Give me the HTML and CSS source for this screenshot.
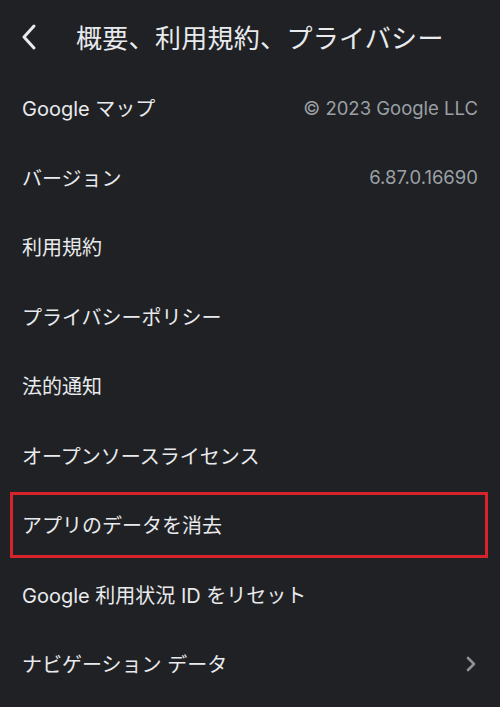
FILE: index.html
```html
<!DOCTYPE html>
<html lang="ja">
<head>
  <meta charset="UTF-8">
  <meta name="viewport" content="width=device-width, initial-scale=1.0">
  <title>概要、利用規約、プライバシー</title>
  <link rel="stylesheet" href="styles.css">
</head>
<body>
  <div class="header">
    <span class="back">
      <svg width="18" height="28" viewBox="0 0 18 28"><path d="M14 3 L4 14 L14 25" fill="none" stroke="#e8eaed" stroke-width="3" stroke-linecap="round" stroke-linejoin="round"/></svg>
    </span>
    <h1>概要、利用規約、プライバシー</h1>
  </div>

  <div class="list">
    <div class="row"><span>Google マップ</span><span class="value">© 2023 Google LLC</span></div>
    <div class="row"><span>バージョン</span><span class="value">6.87.0.16690</span></div>
    <div class="row"><span>利用規約</span></div>
    <div class="row"><span>プライバシーポリシー</span></div>
    <div class="row"><span>法的通知</span></div>
    <div class="row"><span>オープンソースライセンス</span></div>
    <div class="row marked"><span>アプリのデータを消去</span></div>
    <div class="row"><span>Google 利用状況 ID をリセット</span></div>
    <div class="row">
      <span>ナビゲーション データ</span>
      <svg class="chevron" width="12" height="18" viewBox="0 0 12 18"><path d="M3 3 L9 9 L3 15" fill="none" stroke="#8e9196" stroke-width="2.6" stroke-linecap="round" stroke-linejoin="round"/></svg>
    </div>
  </div>
</body>
</html>
```

FILE: styles.css
```css
body {
  margin: 0;
  background: #202124;
  color: #e8eaed;
  font-family: Inter, "Noto Sans CJK JP", sans-serif;
  height: 707px;
  overflow: hidden;
}
.header {
  display: flex;
  align-items: center;
  height: 73px;
  padding: 0 0 0 20px;
  box-sizing: border-box;
}
.back {
  display: flex;
  width: 56px;
}
.header h1 {
  margin: 0;
  font-size: 26px;
  font-weight: 400;
  letter-spacing: 0.3px;
}
.row {
  position: relative;
  display: flex;
  justify-content: space-between;
  align-items: center;
  height: 69.5px;
  padding: 0 22px;
  font-size: 20px;
}
.value {
  color: #9aa0a6;
  font-size: 18.5px;
}
.chevron {
  margin-right: 1px;
}
.row.marked::after {
  content: "";
  position: absolute;
  left: 10px;
  right: 12px;
  top: 2px;
  bottom: 2px;
  border: 3px solid #d7232b;
}
```
